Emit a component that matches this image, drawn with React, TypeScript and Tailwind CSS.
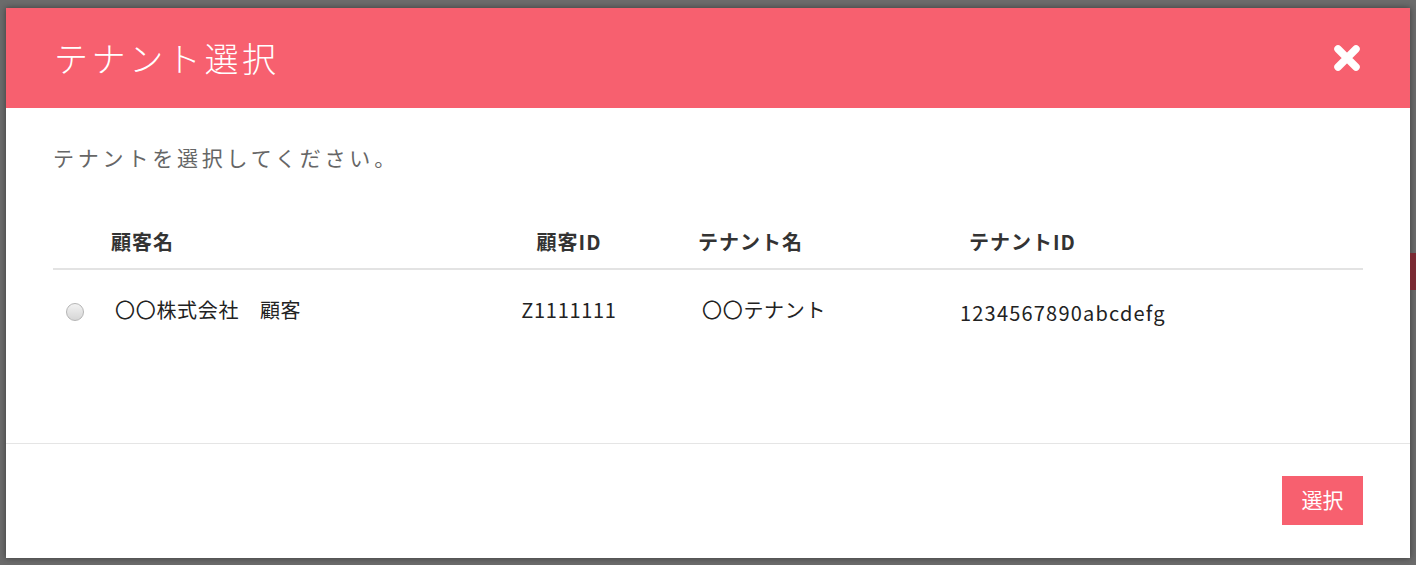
import React from 'react';

const FONT = "font-['Noto_Sans_CJK_JP','Noto_Sans',sans-serif]";

type Row = {
  customer: string;
  customerId: string;
  tenant: string;
  tenantId: string;
};

const rows: Row[] = [
  {
    customer: '〇〇株式会社　顧客',
    customerId: 'Z1111111',
    tenant: '〇〇テナント',
    tenantId: '1234567890abcdefg',
  },
];

function CloseIcon() {
  return (
    <svg width="30" height="30" viewBox="0 0 30 30" aria-hidden>
      <path d="M6 6 L24 24 M24 6 L6 24" stroke="#fff" strokeWidth="7.5" strokeLinecap="round" />
    </svg>
  );
}

function Radio() {
  return (
    <span className="block h-[18px] w-[18px] rounded-full border border-[#b5b5b5] bg-gradient-to-b from-[#f2f2f2] to-[#d6d6d6]" />
  );
}

export default function App() {
  return (
    <div className={`flex h-[565px] w-full overflow-hidden bg-[#6b6b6b] ${FONT}`}>
      {/* overlay edge on the left */}
      <div className="w-[6px] shrink-0" />

      {/* modal */}
      <div className="mt-[8px] flex h-[550px] w-[1404px] shrink-0 flex-col bg-white shadow-[0_0_6px_rgba(0,0,0,0.45)]">
        <div className="flex h-[100px] items-center justify-between bg-[#f7606f] pl-[48px] pr-[48px]">
          <h1 className="text-[34px] font-light leading-none tracking-[3.6px] text-white">テナント選択</h1>
          <button className="flex h-[30px] w-[30px] items-center justify-center">
            <CloseIcon />
          </button>
        </div>

        <div className="flex-1 px-[47px] pt-[35px]">
          <p className="text-[21px] leading-[28px] tracking-[3.8px] text-[#666]">
            テナントを選択してください。
          </p>

          <div className="mt-[54px]">
            <div className="grid h-[45px] grid-cols-[58px_389px_138px_302px_1fr] items-center border-b-2 border-[#e3e3e3] pb-[10px] text-[20px] font-bold leading-none tracking-[1px] text-[#333]">
              <span />
              <span>顧客名</span>
              <span className="text-center">顧客ID</span>
              <span className="pl-[60px]">テナント名</span>
              <span className="pl-[29px]">テナントID</span>
            </div>
            {rows.map((r) => (
              <div
                key={r.customerId}
                className="grid h-[82px] grid-cols-[58px_389px_138px_302px_1fr] items-center text-[20px] leading-none tracking-[0.7px] text-[#222]"
              >
                <span className="flex pl-[13px] pt-[2px]">
                  <Radio />
                </span>
                <span className="pl-[4px] pb-[2px]">{r.customer}</span>
                <span className="pb-[2px] text-center">{r.customerId}</span>
                <span className="pl-[64px] pb-[2px]">{r.tenant}</span>
                <span className="pl-[20px] pt-[4px] tracking-[1.2px]">{r.tenantId}</span>
              </div>
            ))}
          </div>
        </div>

        <div className="flex h-[115px] items-center justify-end border-t border-[#e5e5e5] px-[47px] pb-[2px]">
          <button className="flex h-[49px] w-[81px] items-center justify-center bg-[#f7606f] text-[21px] text-white">
            選択
          </button>
        </div>
      </div>

      {/* right overlay edge with a hint of the page behind */}
      <div className="flex w-[6px] shrink-0 flex-col">
        <div className="h-[253px]" />
        <div className="h-[37px] bg-[#7a2a33]" />
      </div>
    </div>
  );
}
